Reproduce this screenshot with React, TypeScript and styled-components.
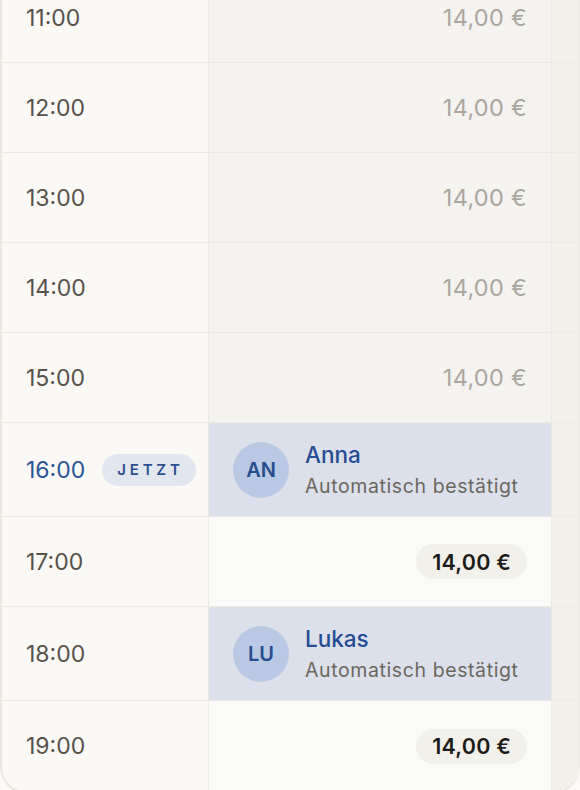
import type { FC } from "react";
import styled, { createGlobalStyle } from "styled-components";

const GlobalStyle = createGlobalStyle`
  html, body {
    margin: 0;
    padding: 0;
    background: #fbfaf7;
    font-family: "Inter", "Noto Sans", sans-serif;
    overflow: hidden;
  }
`;

type SlotState = "past" | "free" | "booked";

interface Slot {
  time: string;
  state: SlotState;
  now?: boolean;
  guest?: { initials: string; name: string; note: string };
}

const slots: Slot[] = [
  { time: "11:00", state: "past" },
  { time: "12:00", state: "past" },
  { time: "13:00", state: "past" },
  { time: "14:00", state: "past" },
  { time: "15:00", state: "past" },
  {
    time: "16:00",
    state: "booked",
    now: true,
    guest: { initials: "AN", name: "Anna", note: "Automatisch bestätigt" },
  },
  { time: "17:00", state: "free" },
  {
    time: "18:00",
    state: "booked",
    guest: { initials: "LU", name: "Lukas", note: "Automatisch bestätigt" },
  },
  { time: "19:00", state: "free" },
];

const Viewport = styled.div`
  height: 790px;
  overflow: hidden;
`;

const Card = styled.div`
  margin-top: -27px;
  width: 577px;
  border-left: 2px solid #e9e6dd;
  border-right: 1px solid #eeebe4;
  border-bottom: 2px solid #e9e6dd;
  border-radius: 0 0 26px 26px;
  overflow: hidden;
  background: #faf9f6;
`;

const Row = styled.div<{ $tall: boolean }>`
  display: grid;
  grid-template-columns: 207px 343px 1fr;
  height: ${(p) => (p.$tall ? 94 : 90)}px;
  border-bottom: 1px solid #ece9e3;
  box-sizing: border-box;

  &:last-child {
    border-bottom: none;
  }
`;

const TimeCell = styled.div`
  display: flex;
  align-items: center;
  gap: 17px;
  padding-left: 24px;
  border-right: 1px solid #ece9e3;
  background: #faf9f6;
`;

const TimeLabel = styled.span<{ $now: boolean }>`
  font-size: 23px;
  color: ${(p) => (p.$now ? "#2a5399" : "#57524a")};
  letter-spacing: 0;
`;

const NowBadge = styled.span`
  display: inline-flex;
  align-items: center;
  height: 32px;
  padding: 0 12px 0 15px;
  border-radius: 16px;
  background: #e2e6ef;
  color: #2a4f8f;
  font-size: 15px;
  font-weight: 600;
  letter-spacing: 3.8px;
`;

const SlotCell = styled.div<{ $state: SlotState }>`
  display: flex;
  align-items: center;
  justify-content: ${(p) => (p.$state === "booked" ? "flex-start" : "flex-end")};
  padding: ${(p) => (p.$state === "booked" ? "0 0 0 24px" : "0 24px 0 0")};
  border-right: 1px solid #ece9e3;
  background: ${(p) =>
    p.$state === "booked" ? "#dce0ea" : p.$state === "past" ? "#f4f3f0" : "#fafaf8"};
  gap: 16px;
`;

const PastPrice = styled.span`
  font-size: 23.5px;
  color: #aba69e;
  letter-spacing: 0.3px;
`;

const PricePill = styled.span`
  display: inline-flex;
  align-items: center;
  height: 35px;
  padding: 0 16px;
  border-radius: 18px;
  background: #f2f0ea;
  font-size: 21.5px;
  font-weight: 600;
  color: #1d1b18;
  letter-spacing: 0.2px;
`;

const Avatar = styled.div`
  width: 56px;
  height: 56px;
  flex-shrink: 0;
  border-radius: 50%;
  background: #bac9e3;
  color: #284d8e;
  display: flex;
  align-items: center;
  justify-content: center;
  font-size: 20px;
  font-weight: 600;
`;

const GuestInfo = styled.div`
  display: flex;
  flex-direction: column;
  gap: 4px;
`;

const GuestName = styled.span`
  font-size: 22.5px;
  font-weight: 500;
  color: #244d93;
  line-height: 28px;
`;

const GuestNote = styled.span`
  font-size: 19.5px;
  color: #6b675f;
  letter-spacing: 0.6px;
  line-height: 26px;
`;

const SideCell = styled.div`
  background: #f2f0eb;
`;

const App: FC = () => {
  return (
    <>
      <GlobalStyle />
      <Viewport>
        <Card>
          {slots.map((slot) => (
            <Row key={slot.time} $tall={slot.state === "booked"}>
              <TimeCell>
                <TimeLabel $now={!!slot.now}>{slot.time}</TimeLabel>
                {slot.now && <NowBadge>JETZT</NowBadge>}
              </TimeCell>
              <SlotCell $state={slot.state}>
                {slot.state === "past" && <PastPrice>14,00 €</PastPrice>}
                {slot.state === "free" && <PricePill>14,00 €</PricePill>}
                {slot.guest && (
                  <>
                    <Avatar>{slot.guest.initials}</Avatar>
                    <GuestInfo>
                      <GuestName>{slot.guest.name}</GuestName>
                      <GuestNote>{slot.guest.note}</GuestNote>
                    </GuestInfo>
                  </>
                )}
              </SlotCell>
              <SideCell />
            </Row>
          ))}
        </Card>
      </Viewport>
    </>
  );
};

export default App;
